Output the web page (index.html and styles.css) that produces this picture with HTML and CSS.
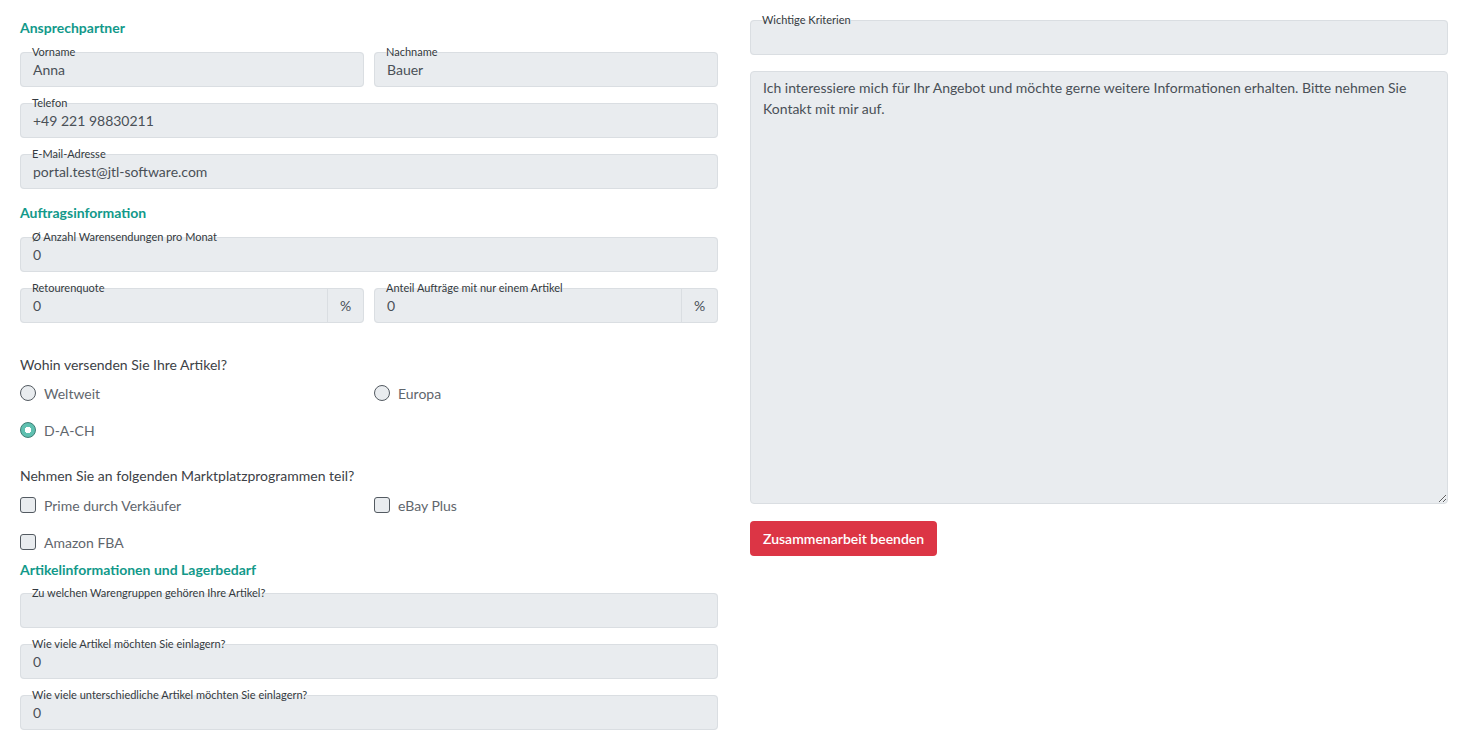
FILE: index.html
```html
<!DOCTYPE html>
<html lang="de">

<head>
    <meta charset="UTF-8">
    <meta name="viewport" content="width=device-width, initial-scale=1.0">
    <title>Fulfillment Anfrage</title>
    <link rel="stylesheet" href="styles.css">
</head>

<body>
    <div class="page">
        <div class="col">
            <h3 class="sec-title first">Ansprechpartner</h3>
            <div class="row-2">
                <fieldset class="field">
                    <legend>Vorname</legend>
                    <div class="val">Anna</div>
                </fieldset>
                <fieldset class="field">
                    <legend>Nachname</legend>
                    <div class="val">Bauer</div>
                </fieldset>
            </div>
            <fieldset class="field">
                <legend>Telefon</legend>
                <div class="val">+49 221 98830211</div>
            </fieldset>
            <fieldset class="field">
                <legend>E-Mail-Adresse</legend>
                <div class="val">portal.test@jtl-software.com</div>
            </fieldset>

            <h3 class="sec-title">Auftragsinformation</h3>
            <fieldset class="field">
                <legend>Ø Anzahl Warensendungen pro Monat</legend>
                <div class="val">0</div>
            </fieldset>
            <div class="row-2">
                <fieldset class="field addon">
                    <legend>Retourenquote</legend>
                    <div class="val">0</div>
                    <span class="unit">%</span>
                </fieldset>
                <fieldset class="field addon">
                    <legend>Anteil Aufträge mit nur einem Artikel</legend>
                    <div class="val">0</div>
                    <span class="unit">%</span>
                </fieldset>
            </div>

            <div class="question q-ship">
                <p class="q-text">Wohin versenden Sie Ihre Artikel?</p>
                <div class="opts">
                    <label class="opt"><input type="radio" name="ship"> Weltweit</label>
                    <label class="opt"><input type="radio" name="ship"> Europa</label>
                    <label class="opt"><input type="radio" name="ship" checked> D-A-CH</label>
                </div>
            </div>

            <div class="question q-market">
                <p class="q-text">Nehmen Sie an folgenden Marktplatzprogrammen teil?</p>
                <div class="opts">
                    <label class="opt"><input type="checkbox"> Prime durch Verkäufer</label>
                    <label class="opt"><input type="checkbox"> eBay Plus</label>
                    <label class="opt"><input type="checkbox"> Amazon FBA</label>
                </div>
            </div>

            <h3 class="sec-title">Artikelinformationen und Lagerbedarf</h3>
            <fieldset class="field">
                <legend>Zu welchen Warengruppen gehören Ihre Artikel?</legend>
                <div class="val"></div>
            </fieldset>
            <fieldset class="field">
                <legend>Wie viele Artikel möchten Sie einlagern?</legend>
                <div class="val">0</div>
            </fieldset>
            <fieldset class="field">
                <legend>Wie viele unterschiedliche Artikel möchten Sie einlagern?</legend>
                <div class="val">0</div>
            </fieldset>
        </div>

        <div class="col">
            <fieldset class="field">
                <legend>Wichtige Kriterien</legend>
                <div class="val"></div>
            </fieldset>
            <textarea class="msg">Ich interessiere mich für Ihr Angebot und möchte gerne weitere Informationen erhalten. Bitte nehmen Sie Kontakt mit mir auf.</textarea>
            <button class="end-btn">Zusammenarbeit beenden</button>
        </div>
    </div>
</body>

</html>
```

FILE: styles.css
```css
body {
    font-family: 'Lato', 'Open Sans', sans-serif;
    margin: 0;
    padding: 0;
    background-color: #fff;
    color: #495057;
    font-size: 14px;
}

.page {
    display: grid;
    grid-template-columns: 1fr 1fr;
    column-gap: 32px;
    padding: 14px 19px 0 20px;
    align-items: start;
}

.col {
    display: flex;
    flex-direction: column;
}

.sec-title {
    color: #12998a;
    font-size: 14px;
    font-weight: 700;
    line-height: 17px;
    margin: 5px 0 10px;
}

.sec-title.first {
    margin-top: 5px;
}

.row-2 {
    display: grid;
    grid-template-columns: 1fr 1fr;
    column-gap: 10px;
}

/* outlined field, the legend sits in the top border */
.field {
    border: 1px solid #dadee2;
    border-radius: 4px;
    background-color: #e9ecef;
    margin: 0 0 10px;
    padding: 0 12px;
    display: flex;
    align-items: center;
    min-width: 0;
}

.field legend {
    font-size: 11px;
    line-height: 12px;
    color: #343a40;
    padding: 0;
    margin-left: -1px;
}

.val {
    flex: 1;
    height: 20px;
    line-height: 20px;
    padding: 2px 0 6px;
    font-size: 14px;
    color: #495057;
}

.field.addon {
    padding-right: 0;
}

.unit {
    width: 35px;
    align-self: stretch;
    border-left: 1px solid #dadee2;
    display: flex;
    align-items: center;
    justify-content: center;
    margin-top: -6px;
    color: #495057;
}

.question {
    margin-top: 22px;
}

.question.q-market {
    margin-top: 26px;
}

.q-text {
    margin: 0 0 8px;
    line-height: 20px;
    color: #3d4247;
}

.q-market .q-text {
    margin-bottom: 9px;
}

.opts {
    display: grid;
    grid-template-columns: 1fr 1fr;
    column-gap: 10px;
    row-gap: 17px;
}

.opt {
    display: flex;
    align-items: center;
    gap: 8px;
    height: 20px;
    color: #5f666d;
}

.opt input {
    appearance: none;
    width: 16px;
    height: 16px;
    margin: 0;
    border: 1px solid #535a61;
    background-color: #e9ecef;
    flex-shrink: 0;
}

.opt input[type="radio"] {
    border-radius: 50%;
}

.opt input[type="checkbox"] {
    border-radius: 3px;
}

.opt input[type="radio"]:checked {
    border-color: #3d7e75;
    background-image: radial-gradient(circle, #fff 0 3px, #5fc0b0 3.5px);
}

.q-market + .sec-title {
    margin: 9px 0 9px;
}

.msg {
    display: block;
    margin-top: 6px;
    height: 433px;
    box-sizing: border-box;
    border: 1px solid #dadee2;
    border-radius: 4px;
    background-color: #e9ecef;
    padding: 5px 12px;
    font-family: inherit;
    font-size: 14px;
    line-height: 21px;
    color: #495057;
    resize: vertical;
}

.end-btn {
    align-self: flex-start;
    margin-top: 17px;
    height: 35px;
    padding: 0 13px;
    background-color: #dc3545;
    color: #fff;
    border: none;
    border-radius: 4px;
    font-family: inherit;
    font-size: 14px;
    font-weight: 600;
    cursor: pointer;
}
```
